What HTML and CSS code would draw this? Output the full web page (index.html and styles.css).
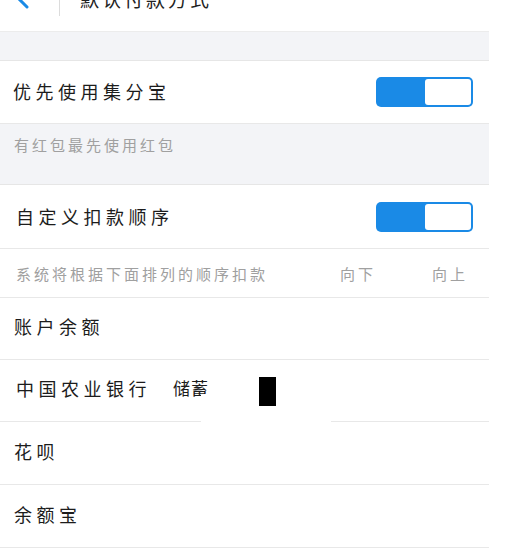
FILE: index.html
```html
<!DOCTYPE html>
<html lang="zh">
<head>
<meta charset="utf-8">
<link rel="stylesheet" href="styles.css">
</head>
<body>
<div class="screen">
  <header class="topbar">
    <div class="topbar-inner">
      <svg class="back" width="20" height="30" viewBox="0 0 20 30"><path d="M16 4 L5 15 L16 26" fill="none" stroke="#1a8ae6" stroke-width="3" stroke-linecap="round"/></svg>
      <span class="vsep"></span>
      <span class="title">默认付款方式</span>
    </div>
  </header>
  <div class="gap"></div>
  <div class="row">
    <span class="label">优先使用集分宝</span>
    <span class="toggle"><span class="knob"></span></span>
  </div>
  <div class="note">有红包最先使用红包</div>
  <div class="row row2">
    <span class="label">自定义扣款顺序</span>
    <span class="toggle"><span class="knob"></span></span>
  </div>
  <div class="order">
    <span class="order-text">系统将根据下面排列的顺序扣款</span>
    <span class="order-btn down">向下</span>
    <span class="order-btn up">向上</span>
  </div>
  <div class="item">账户余额</div>
  <div class="item bank">中国农业银行<span class="card">储蓄</span><span class="patch"></span><span class="redact"></span></div>
  <div class="item">花呗</div>
  <div class="item">余额宝</div>
</div>
</body>
</html>
```
FILE: styles.css
```css
html, body {
  margin: 0;
  padding: 0;
  background: #ffffff;
}
body {
  font-family: "Noto Sans CJK SC", "Noto Sans", sans-serif;
  color: #222;
}
.screen {
  width: 489px;
  background: #fff;
}
.topbar {
  height: 31px;
  border-bottom: 1px solid #ececec;
  overflow: hidden;
}
.topbar-inner {
  display: flex;
  align-items: center;
  height: 40px;
  margin-top: -22px;
}
.back {
  margin-left: 11px;
  margin-top: -4px;
}
.vsep {
  width: 1px;
  height: 36px;
  background: #dcdcdc;
  margin-left: 28px;
}
.title {
  margin-left: 20px;
  font-size: 19px;
  letter-spacing: 3px;
  color: #222;
}
.gap {
  height: 28px;
  background: #f3f4f7;
  border-bottom: 1px solid #e6e6e6;
}
.row {
  height: 63px;
  box-sizing: border-box;
  display: flex;
  align-items: center;
  justify-content: space-between;
  padding: 0 16px 0 13px;
  border-bottom: 1px solid #e8e8e8;
}
.row2 {
  height: 64px;
  padding-left: 16px;
}
.label {
  font-size: 18px;
  line-height: 18px;
  letter-spacing: 4.5px;
  color: #1c1c1c;
  padding-bottom: 2px;
}
.toggle {
  width: 97px;
  height: 30px;
  box-sizing: border-box;
  background: #1a8ae6;
  border-radius: 5px;
  display: flex;
  justify-content: flex-end;
  padding: 2px;
}
.knob {
  width: 46px;
  height: 26px;
  background: #fff;
  border-radius: 3px;
}
.note {
  height: 48px;
  padding: 12px 0 0 14px;
  background: #f3f4f7;
  border-bottom: 1px solid #e6e6e6;
  font-size: 15px;
  line-height: 18px;
  letter-spacing: 3px;
  color: #a0a0a0;
}
.order {
  height: 48px;
  display: flex;
  align-items: center;
  padding-left: 16px;
  border-bottom: 1px solid #e8e8e8;
  font-size: 15px;
  letter-spacing: 3px;
  color: #a0a0a0;
}
.order-text {
  width: 324px;
  flex-shrink: 0;
}
.order-btn {
  width: 92px;
  flex-shrink: 0;
}
.order-btn.up {
  width: auto;
}
.item {
  height: 56px;
  padding-bottom: 5px;
  box-sizing: content-box;
  display: flex;
  align-items: center;
  padding-left: 14px;
  border-bottom: 1px solid #e8e8e8;
  font-size: 18px;
  line-height: 18px;
  letter-spacing: 4.5px;
  color: #1c1c1c;
  position: relative;
}
.item:nth-last-child(-n+2) {
  height: 57px;
}
.bank {
  padding-left: 16px;
}
.card {
  margin-left: 22px;
  font-size: 17px;
  letter-spacing: 1px;
}
.redact {
  position: absolute;
  left: 259px;
  top: 17px;
  width: 17px;
  height: 29px;
  background: #000;
}
.patch {
  position: absolute;
  left: 201px;
  width: 130px;
  top: 34px;
  height: 30px;
  background: #fff;
}
```
